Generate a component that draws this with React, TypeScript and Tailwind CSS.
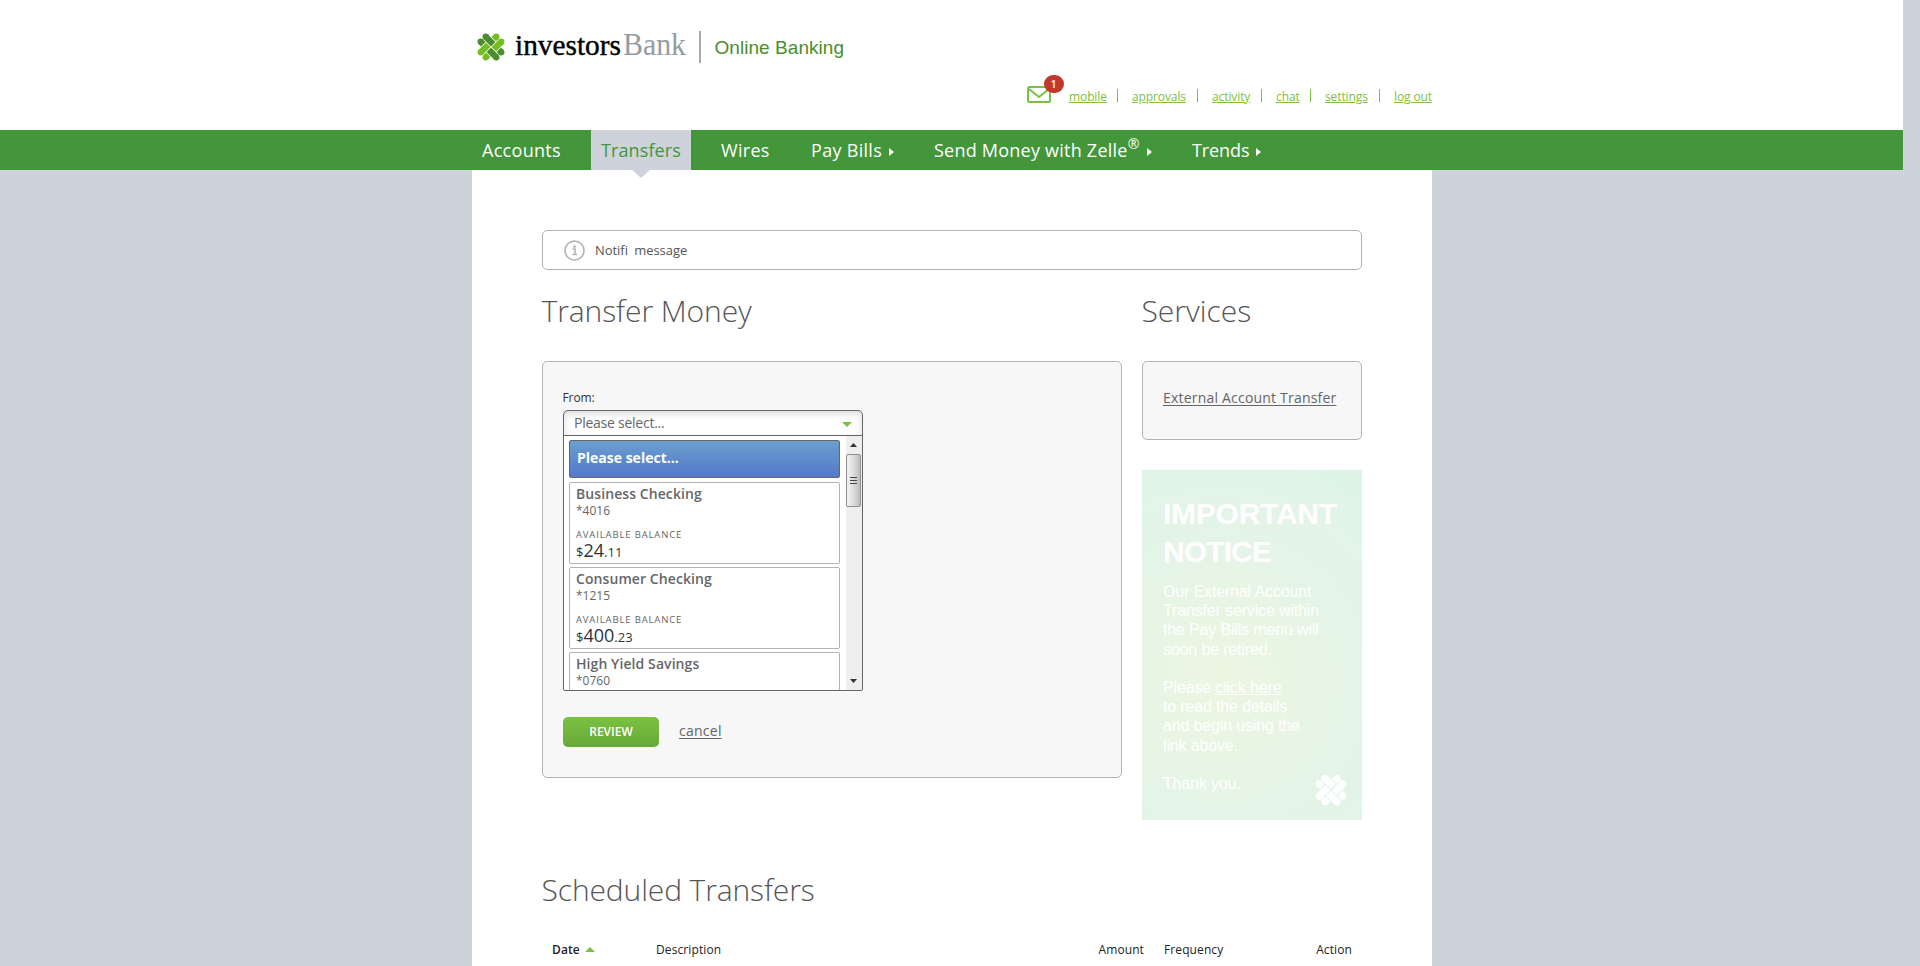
import React from "react";

const SANS = "font-['Open_Sans','Noto_Sans',sans-serif]";

function Clover({ dark, light, className }: { dark: string; light: string; className: string }) {
  const strands: [number, number, number, number, string][] = [
    [8.7, 3.7, 16.2, 11.2, dark],
    [19.3, 24.3, 11.8, 16.8, dark],
    [3.7, 19.3, 11.2, 11.8, light],
    [24.3, 8.7, 16.8, 16.2, light],
    [19.3, 3.7, 16.8, 6.2, light],
    [3.7, 8.7, 6.2, 11.2, dark],
    [24.3, 19.3, 21.8, 16.8, dark],
    [8.7, 24.3, 11.2, 21.8, light],
  ];
  return (
    <svg viewBox="0 0 28 28" className={className}>
      {strands.map(([x1, y1, x2, y2, c]) => (
        <g key={`${x1} ${y1}`}>
          <circle cx={x1} cy={y1} r="3.15" fill={c} />
          <line x1={x1} y1={y1} x2={x2} y2={y2} stroke={c} strokeWidth="6.3" />
        </g>
      ))}
    </svg>
  );
}

function Caret({ className, points }: { className: string; points: string }) {
  return (
    <svg viewBox="0 0 10 10" preserveAspectRatio="none" className={className}>
      <polygon points={points} fill="currentColor" />
    </svg>
  );
}

const UP = "0,10 5,0 10,10";
const DOWN = "0,0 10,0 5,10";
const RIGHT = "0,0 10,5 0,10";

const links = [
  { label: "mobile", w: "w-[38px]" },
  { label: "approvals", w: "w-[55px]" },
  { label: "activity", w: "w-[39px]" },
  { label: "chat", w: "w-[24px]" },
  { label: "settings", w: "w-[44px]" },
  { label: "log out", w: "w-[37.5px]" },
];

const nav = [
  { label: "Accounts", w: "w-[99px]", track: "tracking-[0.3px]" },
  { label: "Transfers", w: "w-[100px]", track: "tracking-[0.1px]", active: true },
  { label: "Wires", w: "w-[70px]", track: "tracking-[0.3px]" },
  { label: "Pay Bills", w: "w-[103px]", track: "tracking-[0.3px]", menu: true },
  { label: "Send Money with Zelle", w: "w-[238px]", track: "tracking-[0.23px]", menu: true, reg: true },
  { label: "Trends", w: "w-[90px]", track: "tracking-[-0.1px]", menu: true },
];

const accounts = [
  { name: "Business Checking", num: "*4016", whole: "24", cents: ".11" },
  { name: "Consumer Checking", num: "*1215", whole: "400", cents: ".23" },
  { name: "High Yield Savings", num: "*0760" },
];

function Header() {
  return (
    <header className="h-[130px] bg-white">
      <div className="mx-auto flex h-full w-[960px] flex-col">
        <div className="flex h-[63px] items-end pl-[5px]">
          <Clover dark="#4b8d2c" light="#76bd22" className="mb-[2px] h-[28px] w-[28px]" />
          <svg className="ml-[9px] h-[40px] w-[174px]" viewBox="0 0 174 40">
            <text x="1" y="32" fontFamily="'Liberation Serif', serif" fontSize="28.5" fill="#000" stroke="#000" strokeWidth="0.4" textLength="106" lengthAdjust="spacingAndGlyphs">investors</text>
            <text x="109" y="32" fontFamily="'Liberation Serif', serif" fontSize="31" fill="#939ba3" textLength="63" lengthAdjust="spacingAndGlyphs">Bank</text>
          </svg>
          <div className="ml-[11px] h-[32px] w-[2px] bg-[#a3aab1]" />
          <div className="ml-[14px] h-[30px] text-[19px] leading-[30px] tracking-[0.05px] text-[#4b8d2c] font-['Liberation_Sans',sans-serif]">Online Banking</div>
        </div>
        <div className="flex h-[40px] items-end justify-end text-[12px] text-[#7ac143]">
          <div className="relative mr-[18.5px] h-[17px] w-[24px]">
            <svg viewBox="0 0 24 17" className="h-[17px] w-[24px]" fill="none" stroke="#7ac143" strokeWidth="2">
              <rect x="1" y="1" width="22" height="15" rx="1.5" />
              <path d="M2 3L12 11L22 3" />
            </svg>
            <div className="absolute left-[17px] top-[-11px] flex h-[18px] w-[20px] items-center justify-center rounded-full bg-[#c0392b] text-[10px] font-semibold text-white">1</div>
          </div>
          {links.map((l, i) => (
            <React.Fragment key={l.label}>
              {i > 0 && <div className="mb-px ml-[9.5px] mr-[14.5px] h-[13px] w-px bg-[#7ac143]" />}
              <a className={`${l.w} h-[16px] whitespace-nowrap leading-[20px] tracking-[-0.1px] underline underline-offset-[1px]`}>{l.label}</a>
            </React.Fragment>
          ))}
        </div>
      </div>
    </header>
  );
}

function Nav() {
  return (
    <nav className="h-[40px] bg-[#43963a]">
      <div className="mx-auto flex h-full w-[960px] gap-[20px] text-[18px] text-white">
        {nav.map((n) => (
          <div
            key={n.label}
            className={`${n.w} ${n.track} relative flex h-[40px] items-center whitespace-nowrap pl-[10.5px] ${n.active ? "bg-[#ced2db] text-[#43963a]" : ""}`}
          >
            <span className="leading-[40px]">{n.label}</span>
            {n.reg && <span className="mb-[12px] text-[14px] leading-none">®</span>}
            {n.menu && <Caret points={RIGHT} className="ml-[7px] mt-[3px] h-[8px] w-[5px]" />}
            {n.active && <Caret points={DOWN} className="absolute left-[40px] top-[39px] h-[9px] w-[20px] text-[#ced2db]" />}
          </div>
        ))}
      </div>
    </nav>
  );
}

function AccountSelect() {
  return (
    <div className="h-[281px] w-[300px] overflow-hidden rounded-t-[5px] rounded-b-[2px] border border-[#666] bg-white">
      <div className="flex h-[25px] items-center justify-between border-b border-[#666] pl-[10.5px] pr-[10px] shadow-[inset_0_3px_7px_rgba(0,0,0,0.14)]">
        <span className="text-[14px] leading-[24px] tracking-[-0.25px] text-[#666]">Please select...</span>
        <Caret points={DOWN} className="mt-[2px] h-[5px] w-[10px] text-[#7ac143]" />
      </div>
      <div className="flex h-[254px] overflow-hidden">
        <div className="flex w-[282px] flex-col gap-[3px] pl-[5px] pt-[4px]">
          <div className="mb-px h-[38px] w-[271px] shrink-0 rounded-[2px] border border-[#666] bg-linear-to-b from-[#6a9fce] to-[#5578c9] pl-[7.5px] text-[14px] font-bold leading-[33px] text-white">
            Please select...
          </div>
          {accounts.map((a) => (
            <div key={a.num} className="h-[82px] w-[271px] shrink-0 rounded-[2px] border border-[#b3b3b3] pl-[6.5px] text-[#666]">
              <div className="h-[20px] text-[14px] font-semibold leading-[22px] tracking-[0.08px]">{a.name}</div>
              <div className="h-[16px] text-[12px] leading-[16px]">{a.num}</div>
              {a.whole && (
                <>
                  <div className="mt-[10px] h-[11px] text-[9.5px] leading-[12px] tracking-[0.85px]">AVAILABLE BALANCE</div>
                  <div className="flex h-[20px] items-baseline leading-[20px] text-[#333]">
                    <span className="text-[13px]">$</span>
                    <span className="text-[18px]">{a.whole}</span>
                    <span className="text-[13px]">{a.cents}</span>
                  </div>
                </>
              )}
            </div>
          ))}
        </div>
        <div className="flex w-[16px] flex-col items-center bg-[#eeeeee]">
          <Caret points={UP} className="mt-[7px] h-[4px] w-[7px] shrink-0 text-[#333]" />
          <div className="mt-[7px] flex h-[53px] w-[15px] shrink-0 flex-col items-center justify-center gap-[2px] rounded-[2px] border border-[#8f8f8f] bg-linear-to-r from-[#f3f3f3] via-[#dcdcdc] to-[#bdbdc2]">
            <div className="h-px w-[7px] bg-[#444]" />
            <div className="h-px w-[7px] bg-[#444]" />
            <div className="h-px w-[7px] bg-[#444]" />
          </div>
          <Caret points={DOWN} className="mt-auto mb-[7px] h-[4px] w-[7px] shrink-0 text-[#333]" />
        </div>
      </div>
    </div>
  );
}

function Notice() {
  return (
    <div className="relative mt-[30px] h-[350px] w-[220px] overflow-hidden bg-[radial-gradient(circle_at_80px_210px,#ebf6e2_0px,#e8f5e4_80px,#e4f4e6_130px,#e3f4e8_190px,#dcf4e7_250px)] pl-[21.5px] pt-[25px] text-white font-['Liberation_Sans',sans-serif]">
      <div className="text-[30px] font-bold leading-[38px]">
        <div className="tracking-[-0.25px]">IMPORTANT</div>
        <div className="tracking-[-0.9px]">NOTICE</div>
      </div>
      <div className="mt-[11px] whitespace-nowrap text-[16px] leading-[19.2px] tracking-[-0.15px]">
        Our External Account
        <br />
        Transfer service within
        <br />
        the Pay Bills menu will
        <br />
        soon be retired.
        <br />
        <br />
        Please <span className="underline underline-offset-1">click here</span>
        <br />
        to read the details
        <br />
        and begin using the
        <br />
        link above.
        <br />
        <br />
        Thank you.
      </div>
      <Clover dark="#ffffff" light="#ffffff" className="absolute bottom-[14px] right-[15px] h-[32px] w-[32px]" />
    </div>
  );
}

export default function App() {
  return (
    <div className={`h-[966px] w-full overflow-hidden bg-[#ced2db] ${SANS}`}>
      <div className="w-[1903px]">
        <Header />
        <Nav />
        <main className="mx-auto h-[796px] w-[960px] bg-white px-[70px] pt-[60px]">
          <div className="flex h-[40px] items-center rounded-[5px] border border-[#b3b3b3] pl-[21px]">
            <svg viewBox="0 0 21 21" className="h-[21px] w-[21px]" fill="none" stroke="#b3b3b3" strokeWidth="1.6">
              <circle cx="10.5" cy="10.5" r="9.5" />
              <path d="M8.5 9H11V14.2M8.3 14.5H13" />
              <circle cx="10.5" cy="6.6" r="0.6" />
            </svg>
            <span className="ml-[10.5px] mt-[2px] text-[13px] tracking-[-0.05px] [word-spacing:3px] text-[#555]">Notifi message</span>
          </div>
          <div className="flex gap-[20px]">
            <section className="w-[580px]">
              <h1 className="mt-[21px] h-[70px] text-[30px] font-light leading-[40px] tracking-[-0.08px] text-[#555]">Transfer Money</h1>
              <div className="h-[417px] rounded-[5px] border border-[#b3b3b3] bg-[#f7f7f7] pl-[20px] pt-[26px]">
                <div className="h-[22px] text-[12px] leading-[20px] tracking-[-0.1px] text-[#333]">From:</div>
                <AccountSelect />
                <div className="mt-[26px] flex h-[30px] items-center">
                  <button className="h-[30px] w-[96px] rounded-[5px] bg-linear-to-b from-[#7ac143] to-[#68a936] pl-[1px] text-[12px] font-semibold text-white">REVIEW</button>
                  <a className="ml-[20.5px] text-[14px] leading-[26px] tracking-[0.25px] text-[#666] underline underline-offset-2 pb-[2px]">cancel</a>
                </div>
              </div>
            </section>
            <section className="w-[220px]">
              <h2 className="mt-[21px] h-[70px] text-[30px] font-light leading-[40px] text-[#555]">Services</h2>
              <div className="h-[79px] rounded-[5px] border border-[#b3b3b3] bg-[#f7f7f7] pl-[20.5px] pt-[23px]">
                <a className="whitespace-nowrap text-[14px] leading-[22px] tracking-[0.2px] text-[#666] underline underline-offset-2">External Account Transfer</a>
              </div>
              <Notice />
            </section>
          </div>
          <h2 className="mt-[50px] h-[69px] text-[30px] font-light leading-[40px] tracking-[-0.12px] text-[#555]">Scheduled Transfers</h2>
          <div className="flex h-[40px] border border-[#fcfcfc] pl-[9.5px] text-[12px] leading-[20px] tracking-[0.1px] text-[#222]">
            <div className="flex w-[104px] gap-[5px]">
              <span className="font-semibold">Date</span>
              <Caret points={UP} className="mt-[7px] h-[5px] w-[10px] text-[#7ac143]" />
            </div>
            <div className="w-[388px]">Description</div>
            <div className="w-[100px] text-right">Amount</div>
            <div className="ml-[20px] w-[87px]">Frequency</div>
            <div className="w-[101px] text-right">Action</div>
          </div>
        </main>
      </div>
    </div>
  );
}
